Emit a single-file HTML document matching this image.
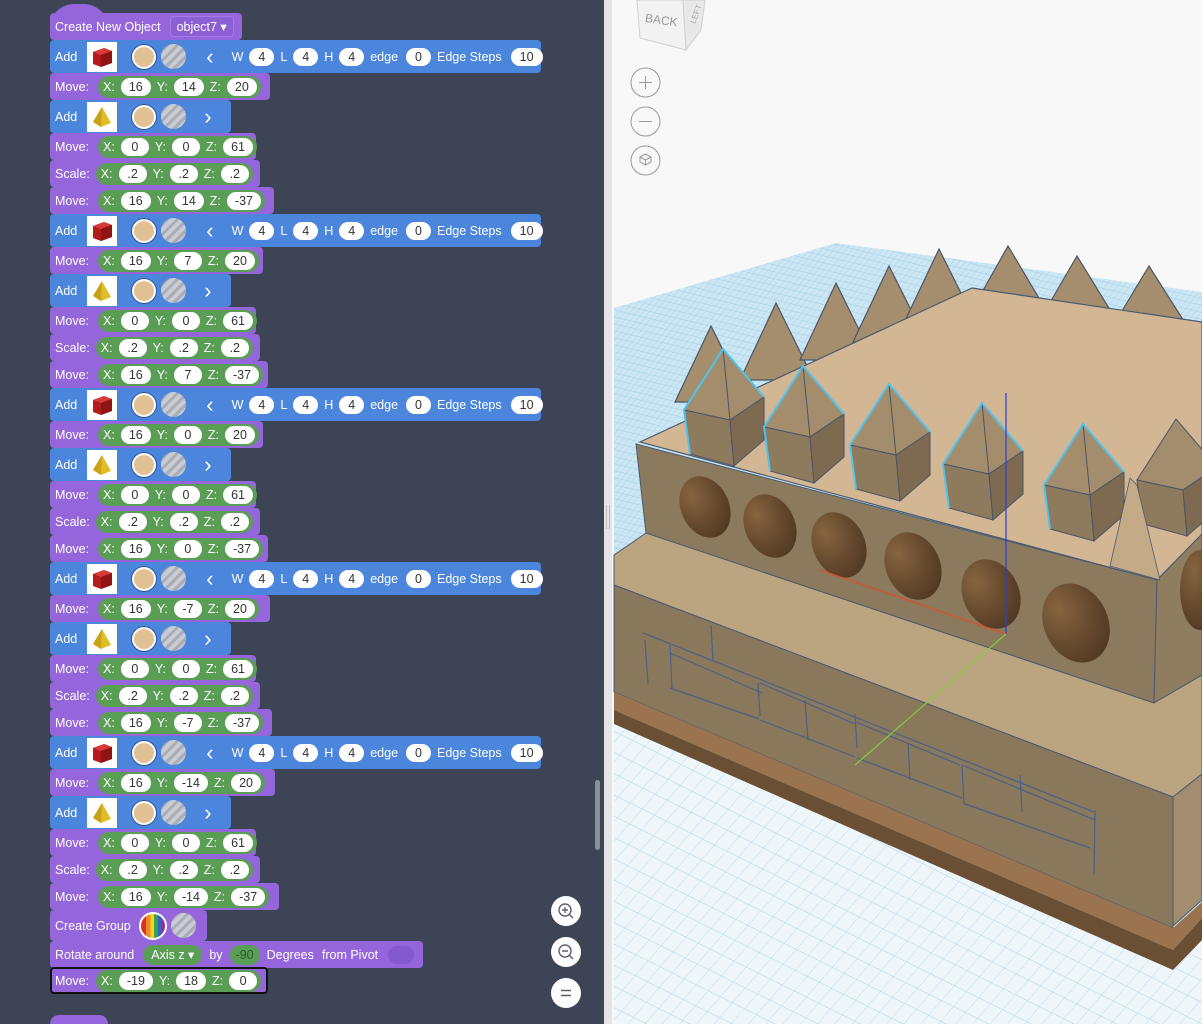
<!DOCTYPE html>
<html style="overflow:hidden;width:1202px;height:1024px"><head><meta charset="utf-8"><style>
*{margin:0;padding:0}
body{width:1202px;height:1024px;overflow:hidden;position:relative;background:#f8f8f8;font-family:"Liberation Sans",sans-serif}
#lp{position:absolute;left:0;top:0;width:604px;height:1024px;background:#3c4455;overflow:hidden}
.b{position:absolute;left:50px;display:flex;align-items:center;color:#fff;font-size:12.5px;border-radius:4px;padding-left:5px;box-sizing:border-box;white-space:nowrap}
.b>*,.g>*{flex-shrink:0}
.p{background:#9566db;height:27px}
.bl{background:#4c86dc;height:33px}
.g{background:#5a9e56;height:22px;border-radius:11px;display:flex;align-items:center;padding:0 4px 0 5px;margin-left:9px}
.o{background:#fff;color:#333;height:18px;border-radius:9px;min-width:28px;text-align:center;line-height:18px;padding:0 8px;box-sizing:border-box;margin:0 6px 0 6px}
.g .o:last-child{margin-right:0}
.ic{width:30px;height:30px;background:#fff;margin-left:10px;display:flex;align-items:center;justify-content:center}
.tan{width:26px;height:26px;border-radius:50%;background:#e2c294;border:1px solid #2a5aa8;box-shadow:0 0 0 2px #fff inset;margin-left:14px;box-sizing:border-box}
.str{width:25px;height:25px;border-radius:50%;margin-left:4px;background:repeating-linear-gradient(135deg,#c9ccd2 0 4px,#a9adb5 4px 7px)}
.bo{background:#fff;color:#333;height:18px;border-radius:9px;line-height:18px;padding:0 9px;margin:0 6px 0 6px}
.zb{position:absolute;left:551px;width:30px;height:30px;border-radius:50%;background:#fff}
</style></head><body>
<div id="lp">
<div style="position:absolute;left:50px;top:4px;width:58px;height:24px;border-radius:29px 29px 0 0;background:#9566db"></div>
<div class="b p" style="top:13px;width:192px">Create New Object<span style="margin-left:9px;border:1px solid #a27ce6;border-radius:4px;padding:2px 6px;background:#8d5fd4">object7 ▾</span></div>

<div class="b bl" style="top:40px;width:491px">Add<div class="ic"><svg width="26" height="26" viewBox="0 0 26 26"><path d="M4 8 L15 4 L23 7 L23 19 L12 23 L4 20Z" fill="#b31c1c"/><path d="M4 8 L15 4 L23 7 L12 11Z" fill="#d63a3a"/><path d="M12 11 L23 7 L23 19 L12 23Z" fill="#8f1414"/></svg></div><div class="tan"></div><div class="str"></div><span style="margin-left:20px;font-size:22px;line-height:20px">‹</span><span style="margin-left:18px">W</span><span class="bo">4</span>L<span class="bo">4</span>H<span class="bo">4</span>edge<span class="bo" style="margin-left:8px">0</span>Edge Steps<span class="bo" style="margin-left:9px">10</span></div>
<div class="b p" style="top:73px;width:220px">Move:<div class="g">X:<span class="o">16</span>Y:<span class="o">14</span>Z:<span class="o">20</span></div></div>
<div class="b bl" style="top:100px;width:181px">Add<div class="ic"><svg width="26" height="26" viewBox="0 0 26 26"><path d="M13 3 L22 19 L12 23 L4 18Z" fill="#e0bd2a"/><path d="M13 3 L12 23 L4 18Z" fill="#c9a218"/></svg></div><div class="tan"></div><div class="str"></div><span style="margin-left:18px;font-size:22px;line-height:20px">›</span></div>
<div class="b p" style="top:133px;width:206px">Move:<div class="g">X:<span class="o">0</span>Y:<span class="o">0</span>Z:<span class="o">61</span></div></div>
<div class="b p" style="top:160px;width:210px">Scale:<div class="g" style="margin-left:6px">X:<span class="o">.2</span>Y:<span class="o">.2</span>Z:<span class="o">.2</span></div></div>
<div class="b p" style="top:187px;width:224px">Move:<div class="g">X:<span class="o">16</span>Y:<span class="o">14</span>Z:<span class="o">-37</span></div></div>

<div class="b bl" style="top:214px;width:491px">Add<div class="ic"><svg width="26" height="26" viewBox="0 0 26 26"><path d="M4 8 L15 4 L23 7 L23 19 L12 23 L4 20Z" fill="#b31c1c"/><path d="M4 8 L15 4 L23 7 L12 11Z" fill="#d63a3a"/><path d="M12 11 L23 7 L23 19 L12 23Z" fill="#8f1414"/></svg></div><div class="tan"></div><div class="str"></div><span style="margin-left:20px;font-size:22px;line-height:20px">‹</span><span style="margin-left:18px">W</span><span class="bo">4</span>L<span class="bo">4</span>H<span class="bo">4</span>edge<span class="bo" style="margin-left:8px">0</span>Edge Steps<span class="bo" style="margin-left:9px">10</span></div>
<div class="b p" style="top:247px;width:213px">Move:<div class="g">X:<span class="o">16</span>Y:<span class="o">7</span>Z:<span class="o">20</span></div></div>
<div class="b bl" style="top:274px;width:181px">Add<div class="ic"><svg width="26" height="26" viewBox="0 0 26 26"><path d="M13 3 L22 19 L12 23 L4 18Z" fill="#e0bd2a"/><path d="M13 3 L12 23 L4 18Z" fill="#c9a218"/></svg></div><div class="tan"></div><div class="str"></div><span style="margin-left:18px;font-size:22px;line-height:20px">›</span></div>
<div class="b p" style="top:307px;width:206px">Move:<div class="g">X:<span class="o">0</span>Y:<span class="o">0</span>Z:<span class="o">61</span></div></div>
<div class="b p" style="top:334px;width:210px">Scale:<div class="g" style="margin-left:6px">X:<span class="o">.2</span>Y:<span class="o">.2</span>Z:<span class="o">.2</span></div></div>
<div class="b p" style="top:361px;width:218px">Move:<div class="g">X:<span class="o">16</span>Y:<span class="o">7</span>Z:<span class="o">-37</span></div></div>

<div class="b bl" style="top:388px;width:491px">Add<div class="ic"><svg width="26" height="26" viewBox="0 0 26 26"><path d="M4 8 L15 4 L23 7 L23 19 L12 23 L4 20Z" fill="#b31c1c"/><path d="M4 8 L15 4 L23 7 L12 11Z" fill="#d63a3a"/><path d="M12 11 L23 7 L23 19 L12 23Z" fill="#8f1414"/></svg></div><div class="tan"></div><div class="str"></div><span style="margin-left:20px;font-size:22px;line-height:20px">‹</span><span style="margin-left:18px">W</span><span class="bo">4</span>L<span class="bo">4</span>H<span class="bo">4</span>edge<span class="bo" style="margin-left:8px">0</span>Edge Steps<span class="bo" style="margin-left:9px">10</span></div>
<div class="b p" style="top:421px;width:213px">Move:<div class="g">X:<span class="o">16</span>Y:<span class="o">0</span>Z:<span class="o">20</span></div></div>
<div class="b bl" style="top:448px;width:181px">Add<div class="ic"><svg width="26" height="26" viewBox="0 0 26 26"><path d="M13 3 L22 19 L12 23 L4 18Z" fill="#e0bd2a"/><path d="M13 3 L12 23 L4 18Z" fill="#c9a218"/></svg></div><div class="tan"></div><div class="str"></div><span style="margin-left:18px;font-size:22px;line-height:20px">›</span></div>
<div class="b p" style="top:481px;width:206px">Move:<div class="g">X:<span class="o">0</span>Y:<span class="o">0</span>Z:<span class="o">61</span></div></div>
<div class="b p" style="top:508px;width:210px">Scale:<div class="g" style="margin-left:6px">X:<span class="o">.2</span>Y:<span class="o">.2</span>Z:<span class="o">.2</span></div></div>
<div class="b p" style="top:535px;width:218px">Move:<div class="g">X:<span class="o">16</span>Y:<span class="o">0</span>Z:<span class="o">-37</span></div></div>

<div class="b bl" style="top:562px;width:491px">Add<div class="ic"><svg width="26" height="26" viewBox="0 0 26 26"><path d="M4 8 L15 4 L23 7 L23 19 L12 23 L4 20Z" fill="#b31c1c"/><path d="M4 8 L15 4 L23 7 L12 11Z" fill="#d63a3a"/><path d="M12 11 L23 7 L23 19 L12 23Z" fill="#8f1414"/></svg></div><div class="tan"></div><div class="str"></div><span style="margin-left:20px;font-size:22px;line-height:20px">‹</span><span style="margin-left:18px">W</span><span class="bo">4</span>L<span class="bo">4</span>H<span class="bo">4</span>edge<span class="bo" style="margin-left:8px">0</span>Edge Steps<span class="bo" style="margin-left:9px">10</span></div>
<div class="b p" style="top:595px;width:220px">Move:<div class="g">X:<span class="o">16</span>Y:<span class="o">-7</span>Z:<span class="o">20</span></div></div>
<div class="b bl" style="top:622px;width:181px">Add<div class="ic"><svg width="26" height="26" viewBox="0 0 26 26"><path d="M13 3 L22 19 L12 23 L4 18Z" fill="#e0bd2a"/><path d="M13 3 L12 23 L4 18Z" fill="#c9a218"/></svg></div><div class="tan"></div><div class="str"></div><span style="margin-left:18px;font-size:22px;line-height:20px">›</span></div>
<div class="b p" style="top:655px;width:206px">Move:<div class="g">X:<span class="o">0</span>Y:<span class="o">0</span>Z:<span class="o">61</span></div></div>
<div class="b p" style="top:682px;width:210px">Scale:<div class="g" style="margin-left:6px">X:<span class="o">.2</span>Y:<span class="o">.2</span>Z:<span class="o">.2</span></div></div>
<div class="b p" style="top:709px;width:222px">Move:<div class="g">X:<span class="o">16</span>Y:<span class="o">-7</span>Z:<span class="o">-37</span></div></div>

<div class="b bl" style="top:736px;width:491px">Add<div class="ic"><svg width="26" height="26" viewBox="0 0 26 26"><path d="M4 8 L15 4 L23 7 L23 19 L12 23 L4 20Z" fill="#b31c1c"/><path d="M4 8 L15 4 L23 7 L12 11Z" fill="#d63a3a"/><path d="M12 11 L23 7 L23 19 L12 23Z" fill="#8f1414"/></svg></div><div class="tan"></div><div class="str"></div><span style="margin-left:20px;font-size:22px;line-height:20px">‹</span><span style="margin-left:18px">W</span><span class="bo">4</span>L<span class="bo">4</span>H<span class="bo">4</span>edge<span class="bo" style="margin-left:8px">0</span>Edge Steps<span class="bo" style="margin-left:9px">10</span></div>
<div class="b p" style="top:769px;width:225px">Move:<div class="g">X:<span class="o">16</span>Y:<span class="o">-14</span>Z:<span class="o">20</span></div></div>
<div class="b bl" style="top:796px;width:181px">Add<div class="ic"><svg width="26" height="26" viewBox="0 0 26 26"><path d="M13 3 L22 19 L12 23 L4 18Z" fill="#e0bd2a"/><path d="M13 3 L12 23 L4 18Z" fill="#c9a218"/></svg></div><div class="tan"></div><div class="str"></div><span style="margin-left:18px;font-size:22px;line-height:20px">›</span></div>
<div class="b p" style="top:829px;width:206px">Move:<div class="g">X:<span class="o">0</span>Y:<span class="o">0</span>Z:<span class="o">61</span></div></div>
<div class="b p" style="top:856px;width:210px">Scale:<div class="g" style="margin-left:6px">X:<span class="o">.2</span>Y:<span class="o">.2</span>Z:<span class="o">.2</span></div></div>
<div class="b p" style="top:883px;width:229px">Move:<div class="g">X:<span class="o">16</span>Y:<span class="o">-14</span>Z:<span class="o">-37</span></div></div>

<div class="b p" style="top:910px;width:157px;height:31px">Create Group<div style="width:24px;height:24px;border-radius:50%;margin-left:8px;border:2px solid #fff;background:linear-gradient(90deg,#d9312b 0 20%,#f08a24 20% 40%,#f5d327 40% 55%,#3aa24a 55% 70%,#2f63c9 70% 85%,#9b2c8e 85%)"></div><div class="str"></div></div>
<div class="b p" style="top:941px;width:373px">Rotate around<span style="background:#5a9e56;border-radius:11px;height:20px;line-height:20px;padding:0 8px;margin:0 7px 0 9px">Axis z ▾</span>by<span style="background:#5a9e56;color:#2f5a2c;border-radius:11px;height:20px;line-height:20px;padding:0 6px;margin:0 7px 0 7px">-90</span>Degrees<span style="margin-left:8px">from Pivot</span><span style="width:26px;height:18px;border-radius:9px;background:#8458cf;margin-left:10px"></span></div>
<div class="b p" style="top:967px;width:218px;border:2px solid #111;padding-left:3px">Move:<div class="g" style="margin-left:7px">X:<span class="o">-19</span>Y:<span class="o">18</span>Z:<span class="o">0</span></div></div>
<div style="position:absolute;left:50px;top:1015px;width:58px;height:9px;border-radius:29px 29px 0 0;background:#9566db"></div>

<div class="zb" style="top:896px"><svg width="30" height="30" viewBox="0 0 30 30" fill="none" stroke="#5a6070" stroke-width="1.4"><circle cx="14" cy="14" r="6"/><path d="M18.5 18.5 L22 22 M11 14 H17 M14 11 V17"/></svg></div>
<div class="zb" style="top:937px"><svg width="30" height="30" viewBox="0 0 30 30" fill="none" stroke="#5a6070" stroke-width="1.4"><circle cx="14" cy="14" r="6"/><path d="M18.5 18.5 L22 22 M11 14 H17"/></svg></div>
<div class="zb" style="top:978px"><svg width="30" height="30" viewBox="0 0 30 30" fill="none" stroke="#5a6070" stroke-width="1.6"><path d="M10 12.5 H20 M10 17.5 H20"/></svg></div>
<div style="position:absolute;left:595px;top:780px;width:5px;height:70px;border-radius:3px;background:#8a8f99"></div>
</div>

<div style="position:absolute;left:604px;top:0;width:9px;height:1024px;background:#e4e4e6"></div>

<svg style="position:absolute;left:604px;top:0" width="598" height="1024" viewBox="604 0 598 1024">
<defs>
<pattern id="gf" width="6" height="6" patternUnits="userSpaceOnUse" patternTransform="skewX(-30) rotate(12)"><rect width="6" height="6" fill="#cde6f3"/><path d="M0 0H6M0 0V6" stroke="#8ec5df" stroke-width="0.6"/></pattern>
<pattern id="gn" width="16" height="16" patternUnits="userSpaceOnUse" patternTransform="skewX(-25) rotate(22)"><rect width="16" height="16" fill="#eef6fa"/><path d="M0 0H16M0 0V16" stroke="#a9d3e8" stroke-width="0.8"/></pattern>
<radialGradient id="hg" cx="0.35" cy="0.25" r="0.9"><stop offset="0" stop-color="#86643f"/><stop offset="1" stop-color="#4a3320"/></radialGradient>
</defs>
<rect x="612" y="0" width="590" height="1024" fill="#f8f8f8"/>
<polygon points="614,308 836,243 1202,292 1202,1024 614,1024" fill="url(#gf)"/>
<polygon points="614,690 1173,930 1202,910 1202,1024 614,1024" fill="url(#gn)"/>
<g fill="#a48e6e" stroke="#4a5568" stroke-width="1.2">
<polygon points="675,402 711,326 749,402"/><polygon points="740,380 776,303 814,380"/><polygon points="800,360 836,283 874,360"/><polygon points="853,342 889,266 927,342"/><polygon points="903,325 939,249 977,325"/><polygon points="972,310 1008,246 1046,310"/><polygon points="1041,318 1077,256 1115,318"/><polygon points="1113,326 1149,266 1187,326"/>
</g>
<polygon points="640,442 972,288 1202,322 1202,534 1157,580" fill="#d3b794" stroke="#4a5a70" stroke-width="1.2"/>
<polygon points="636,444 1157,580 1154,703 646,533" fill="#8b7a5e" stroke="#4a5a70" stroke-width="1"/>
<polygon points="1157,580 1202,534 1202,675 1154,703" fill="#8f7d60" stroke="#4a5a70" stroke-width="1"/>
<g fill="url(#hg)">
<ellipse cx="705" cy="507" rx="24" ry="32" transform="rotate(-25 705 507)"/>
<ellipse cx="770" cy="526" rx="25" ry="33" transform="rotate(-25 770 526)"/>
<ellipse cx="839" cy="545" rx="26" ry="34" transform="rotate(-25 839 545)"/>
<ellipse cx="913" cy="566" rx="27" ry="35" transform="rotate(-25 913 566)"/>
<ellipse cx="991" cy="594" rx="28" ry="36" transform="rotate(-25 991 594)"/>
<ellipse cx="1076" cy="623" rx="32" ry="41" transform="rotate(-25 1076 623)"/>
<ellipse cx="1200" cy="590" rx="20" ry="40"/>
</g>
<g stroke="#4a5568" stroke-width="1">
<g id="fp"><polygon points="723,349 684,410 730,420 764,397" fill="#a38d6d"/><polygon points="684,410 730,420 734,466 690,454" fill="#8e7a5c"/><polygon points="730,420 764,397 764,440 734,466" fill="#7d6a50"/><path d="M723,349 L730,420" fill="none"/><path d="M690,454 L684,410 L723,349 L764,397" fill="none" stroke="#4fc3f0" stroke-width="2"/></g>
<use href="#fp" transform="translate(80,17)"/>
<use href="#fp" transform="translate(166,35)"/>
<use href="#fp" transform="translate(259,54)"/>
<use href="#fp" transform="translate(360,75)"/>
<g transform="translate(453,70)"><polygon points="723,349 684,410 730,420 764,397" fill="#a38d6d"/><polygon points="684,410 730,420 734,466 690,454" fill="#8e7a5c"/><polygon points="730,420 764,397 764,440 734,466" fill="#7d6a50"/></g>
</g>
<polygon points="1130,478 1137,485 1160,580 1110,566" fill="#c4aa86" stroke="#4a5a70" stroke-width="0.8"/>
<polygon points="614,555 646,533 1154,703 1202,675 1202,774 1173,797 614,585" fill="#bba580" stroke="#4a5a70" stroke-width="1"/>
<polygon points="614,585 1173,797 1173,928 614,692" fill="#8a785c" stroke="#4a5a70" stroke-width="1"/>
<polygon points="1173,797 1202,774 1202,900 1173,926" fill="#a28d6e" stroke="#4a5a70" stroke-width="1"/>
<g stroke="#4a6088" stroke-width="1.2" fill="none">
<path d="M643,633 L1094,812 M670,653 L762,693 M760,683 L855,724 M856,722 L960,765 M962,765 L1095,820"/>
<path d="M645,640 L648,684 M670,645 L672,688 M711,625 L713,661 M758,683 L760,716 M805,700 L808,740 M855,714 L857,748 M908,744 L910,780 M962,766 L964,805 M1020,775 L1022,812 M1095,810 L1094,875"/>
<path d="M670,688 L759,719 M760,720 L855,757 M857,758 L962,798 M965,804 L1090,848"/>
</g>
<polygon points="614,692 1173,928 1202,902 1202,918 1173,950 614,710" fill="#9a7450"/>
<polygon points="614,710 1173,950 1202,918 1202,940 1173,970 614,724" fill="#6a4f34"/>
<path d="M1006,393 V634" stroke="#2b3fd0" stroke-width="1.2"/>
<path d="M820,570 L1006,634" stroke="#e0502a" stroke-width="1.2"/>
<path d="M1006,634 L855,765" stroke="#7ed13a" stroke-width="1.2"/>
<polygon points="637,0 683,0 686,50 640,38" fill="#f2f2f2" stroke="#d0d0d0"/>
<polygon points="683,0 705,0 701,30 686,50" fill="#e8e8e8" stroke="#d0d0d0"/>
<text x="645" y="24" font-family="Liberation Sans" font-size="12" fill="#999" transform="rotate(8 660 20)">BACK</text>
<text x="688" y="22" font-family="Liberation Sans" font-size="8" fill="#aaa" transform="rotate(-70 693 18)">LEFT</text>
<g fill="none" stroke="#999" stroke-width="1"><circle cx="645.5" cy="82.5" r="14.5"/><path d="M639 82.5 H652 M645.5 76 V89"/>
<circle cx="645.5" cy="121.5" r="14.5"/><path d="M639 121.5 H652"/>
<circle cx="645.5" cy="160.5" r="14.5"/><path d="M640 157 L645.5 154 L651 157 L651 162 L645.5 165 L640 162Z M640 157 L645.5 160 L651 157 M645.5 160 V165"/></g>
<g fill="#bbb"><rect x="606" y="505" width="1" height="24"/><rect x="609" y="505" width="1" height="24"/></g>
</svg>
</body></html>
